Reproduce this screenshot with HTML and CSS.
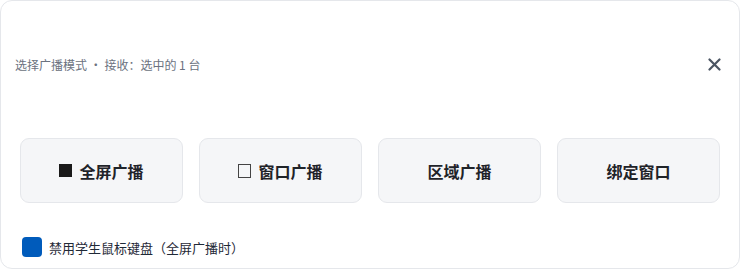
FILE: index.html
```html
<!DOCTYPE html>
<html lang="zh-CN">
<head>
  <meta charset="utf-8" />
  <title>广播模式</title>
  <link rel="stylesheet" href="styles.css">
</head>
<body>
  <div class="card">
    <div class="header">
      <span class="hint">选择广播模式 · 接收：选中的 1 台</span>
      <span class="close">
        <svg width="13" height="13" viewBox="0 0 13 13">
          <path d="M1.5 1.5 L11.5 11.5 M11.5 1.5 L1.5 11.5" stroke="#4b5563" stroke-width="2.2" stroke-linecap="round" />
        </svg>
      </span>
    </div>
    <div class="modes">
      <button class="mode-btn"><span class="sq filled"></span>全屏广播</button>
      <button class="mode-btn"><span class="sq hollow"></span>窗口广播</button>
      <button class="mode-btn">区域广播</button>
      <button class="mode-btn">绑定窗口</button>
    </div>
    <label class="lock-row">
      <span class="box"></span>
      <span>禁用学生鼠标键盘（全屏广播时）</span>
    </label>
  </div>
</body>
</html>
```

FILE: styles.css
```css
body{
  margin: 0;
  background: #ffffff;
  font-family: "Noto Sans CJK SC", "Noto Sans", sans-serif;
}
.card{
  box-sizing: border-box;
  width: 740px;
  height: 269px;
  padding-top: 48px;
  border: 1px solid #e5e7eb;
  border-radius: 12px;
  background: #ffffff;
}
.header{
  display: flex;
  align-items: center;
  justify-content: space-between;
  height: 30px;
  padding: 0 18px 0 14px;
}
.hint{
  color: #6b7280;
  font-size: 12px;
}
.close{
  display: flex;
}
.modes{
  display: grid;
  grid-template-columns: repeat(4, 1fr);
  gap: 16px;
  margin-top: 59px;
  padding: 0 19px;
}
.mode-btn{
  display: flex;
  align-items: center;
  justify-content: center;
  height: 65px;
  border: 1px solid #e5e7eb;
  border-radius: 9px;
  background: #f5f6f8;
  color: #1f2329;
  font-family: inherit;
  font-size: 16px;
  font-weight: 700;
}
.sq{
  box-sizing: border-box;
  display: inline-block;
  width: 13px;
  height: 13px;
  margin-right: 7px;
}
.filled{
  background: #1a1a1a;
}
.hollow{
  height: 14px;
  border: 1.5px solid #444444;
}
.lock-row{
  display: flex;
  align-items: center;
  gap: 7px;
  margin-top: 34px;
  padding-left: 21px;
  color: #1f2937;
  font-size: 13px;
}
.box{
  width: 20px;
  height: 20px;
  border-radius: 4px;
  background: #005bbb;
}
```
